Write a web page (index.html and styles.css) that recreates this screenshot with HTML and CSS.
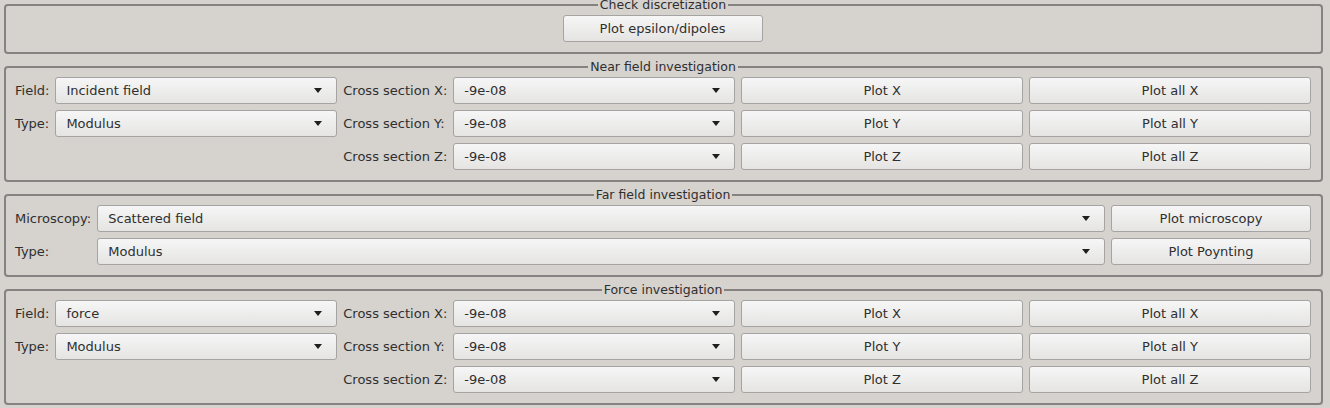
FILE: index.html
```html
<!DOCTYPE html>
<html>
<head>
<meta charset="utf-8">
<link rel="stylesheet" href="styles.css">
</head>
<body>
<div class="app">
  <fieldset class="group g1">
    <legend>Check discretization</legend>
    <div class="center-row">
      <div class="btn btn-eps">Plot epsilon/dipoles</div>
    </div>
  </fieldset>

  <fieldset class="group">
    <legend>Near field investigation</legend>
    <div class="grid6">
      <span class="lbl">Field:</span>
      <div class="combo"><span>Incident field</span><i class="arrow"></i></div>
      <span class="lbl">Cross section X:</span>
      <div class="combo"><span>-9e-08</span><i class="arrow"></i></div>
      <div class="btn">Plot X</div>
      <div class="btn">Plot all X</div>

      <span class="lbl">Type:</span>
      <div class="combo"><span>Modulus</span><i class="arrow"></i></div>
      <span class="lbl">Cross section Y:</span>
      <div class="combo"><span>-9e-08</span><i class="arrow"></i></div>
      <div class="btn">Plot Y</div>
      <div class="btn">Plot all Y</div>

      <span class="lbl"></span>
      <span></span>
      <span class="lbl">Cross section Z:</span>
      <div class="combo"><span>-9e-08</span><i class="arrow"></i></div>
      <div class="btn">Plot Z</div>
      <div class="btn">Plot all Z</div>
    </div>
  </fieldset>

  <fieldset class="group">
    <legend>Far field investigation</legend>
    <div class="grid3">
      <span class="lbl">Microscopy:</span>
      <div class="combo"><span>Scattered field</span><i class="arrow"></i></div>
      <div class="btn">Plot microscopy</div>

      <span class="lbl">Type:</span>
      <div class="combo"><span>Modulus</span><i class="arrow"></i></div>
      <div class="btn">Plot Poynting</div>
    </div>
  </fieldset>

  <fieldset class="group">
    <legend>Force investigation</legend>
    <div class="grid6">
      <span class="lbl">Field:</span>
      <div class="combo"><span>force</span><i class="arrow"></i></div>
      <span class="lbl">Cross section X:</span>
      <div class="combo"><span>-9e-08</span><i class="arrow"></i></div>
      <div class="btn">Plot X</div>
      <div class="btn">Plot all X</div>

      <span class="lbl">Type:</span>
      <div class="combo"><span>Modulus</span><i class="arrow"></i></div>
      <span class="lbl">Cross section Y:</span>
      <div class="combo"><span>-9e-08</span><i class="arrow"></i></div>
      <div class="btn">Plot Y</div>
      <div class="btn">Plot all Y</div>

      <span class="lbl"></span>
      <span></span>
      <span class="lbl">Cross section Z:</span>
      <div class="combo"><span>-9e-08</span><i class="arrow"></i></div>
      <div class="btn">Plot Z</div>
      <div class="btn">Plot all Z</div>
    </div>
  </fieldset>
</div>
</body>
</html>
```

FILE: styles.css
```css
html, body {
  margin: 0;
  padding: 0;
  background: #d6d2ce;
  height: 100%;
  overflow: hidden;
}
body {
  font-family: "DejaVu Sans", sans-serif;
  font-size: 13px;
  color: #2f2f2f;
}
.app {
  padding: 0 7px 0 4px;
  display: flex;
  flex-direction: column;
  gap: 6px;
  margin-top: -2px;
}
.group {
  margin: 0;
  border: 2px solid #858382;
  border-radius: 4px;
  padding: 3px 10px 10px 9px;
  min-width: 0;
}
.group legend {
  margin: 0 auto;
  padding: 0 2px;
  line-height: 14px;
  height: 14px;
  font-size: 12.5px;
  color: #2f2f2f;
}
.center-row {
  display: flex;
  justify-content: center;
}
.btn {
  box-sizing: border-box;
  height: 27px;
  border: 1px solid #a6a4a2;
  border-radius: 3px;
  background: linear-gradient(#f6f6f6, #e5e4e3);
  display: flex;
  align-items: center;
  justify-content: center;
  color: #2f2f2f;
  white-space: nowrap;
}
.btn-eps {
  width: 200px;
  margin-right: 1px;
}
.grid6 {
  display: grid;
  grid-template-columns: auto 1fr auto 1fr 1fr 1fr;
  grid-auto-rows: 27px;
  column-gap: 6px;
  row-gap: 6px;
  align-items: center;
}
.grid3 {
  display: grid;
  grid-template-columns: auto 1fr 200px;
  grid-auto-rows: 27px;
  column-gap: 6px;
  row-gap: 6px;
  align-items: center;
}
.lbl {
  white-space: nowrap;
  color: #2f2f2f;
}
.combo {
  box-sizing: border-box;
  height: 27px;
  border: 1px solid #a6a4a2;
  border-radius: 3px;
  background: linear-gradient(#f6f6f6, #e5e4e3);
  display: flex;
  align-items: center;
  justify-content: space-between;
  padding: 0 14px 0 10px;
  color: #2f2f2f;
  min-width: 0;
  white-space: nowrap;
}
.arrow {
  display: block;
  width: 0;
  height: 0;
  border-left: 4px solid transparent;
  border-right: 4px solid transparent;
  border-top: 5px solid #1e1e1e;
}
```
